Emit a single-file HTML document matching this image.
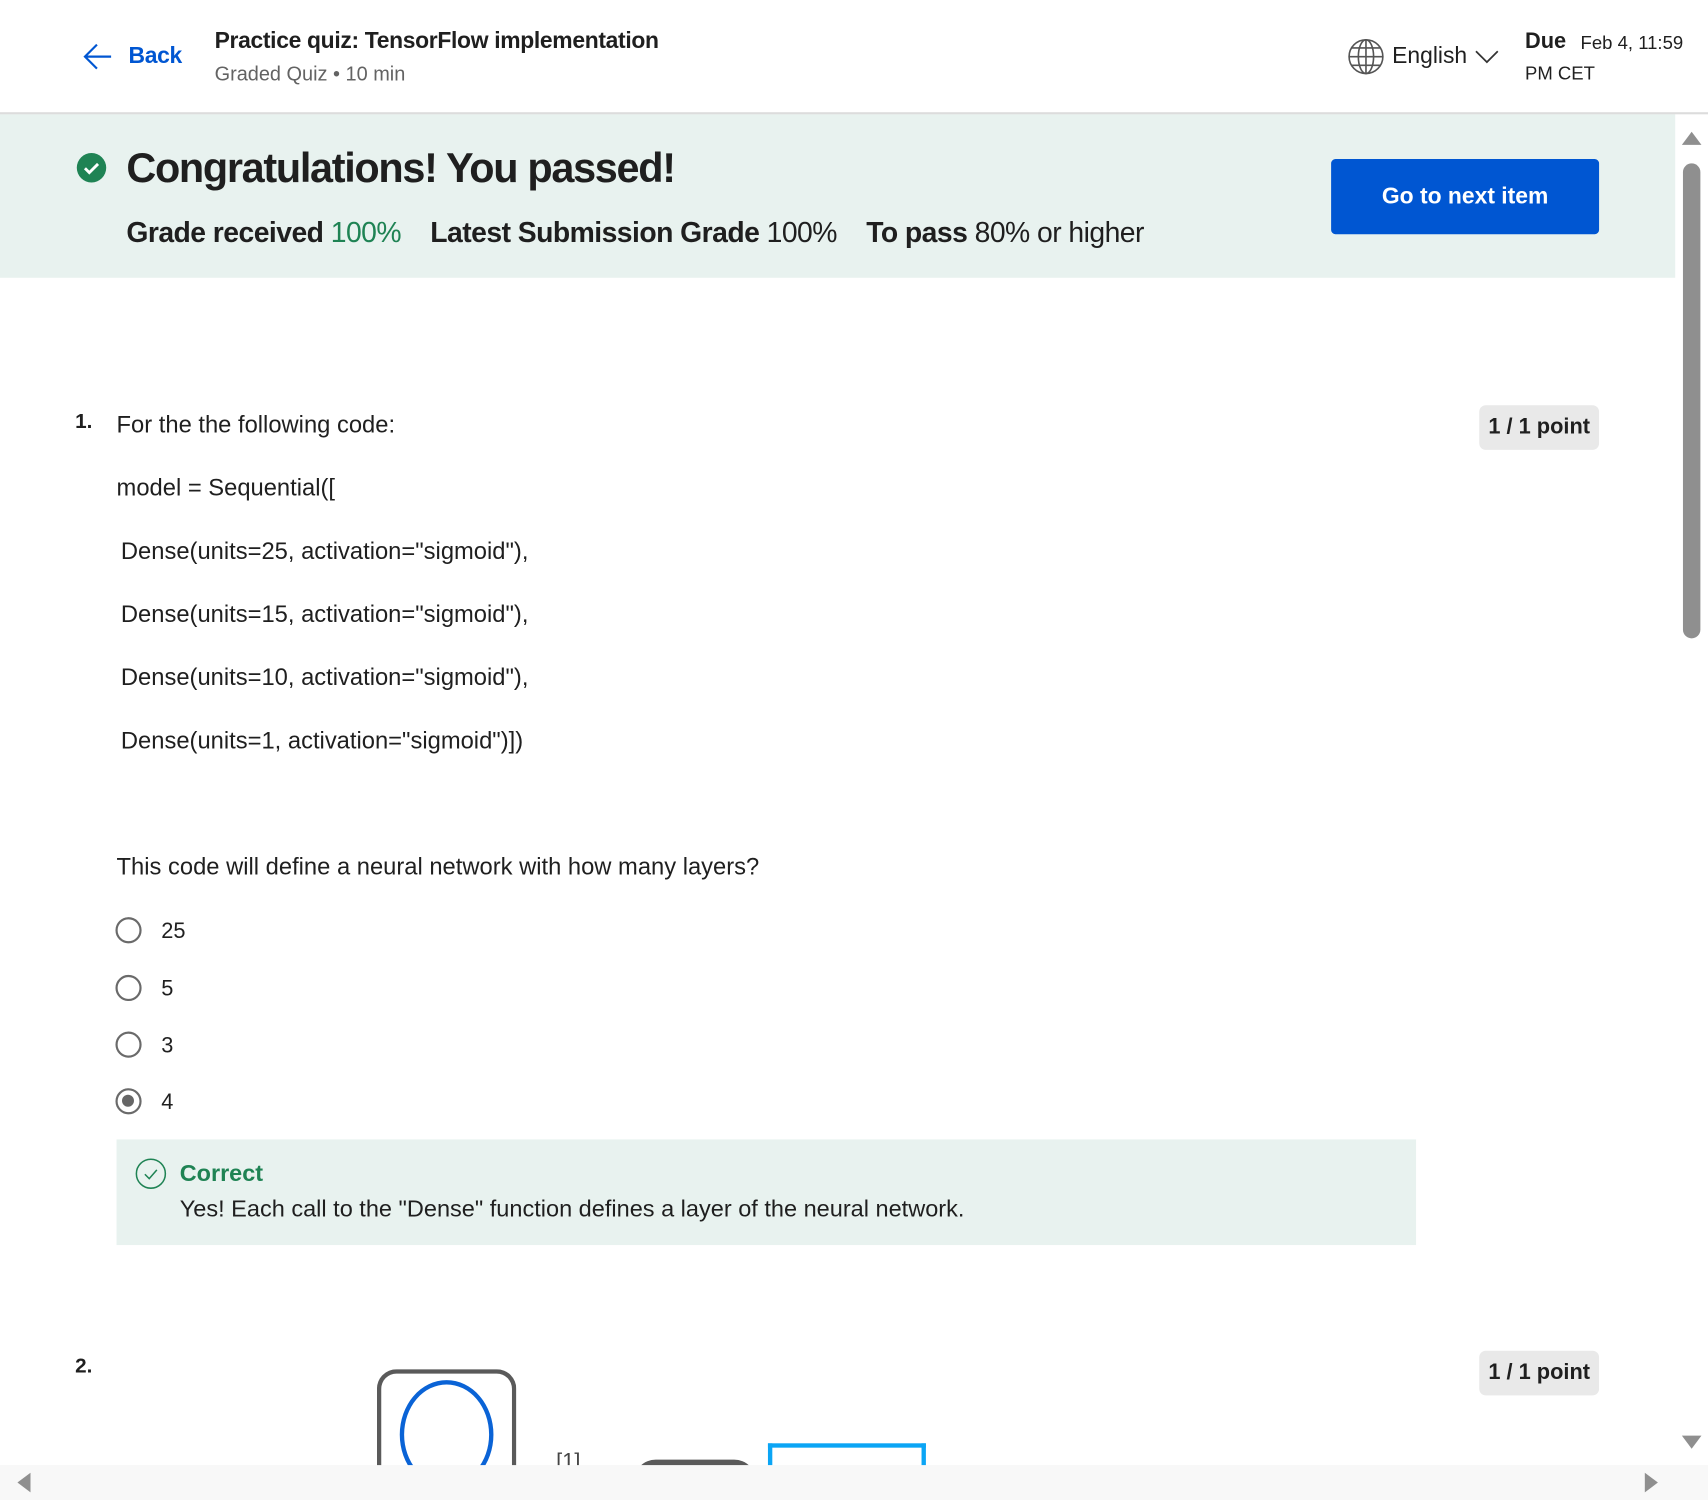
<!DOCTYPE html>
<html><head><meta charset="utf-8"><style>
html,body{margin:0;padding:0;width:1708px;height:1499px;overflow:hidden;background:#fff;}
#w{position:absolute;left:0;top:0;width:1568px;height:1377px;overflow:hidden;transform:scale(1.08929);transform-origin:0 0;font-family:"Liberation Sans",sans-serif;color:#1f1f1f;}
.a{position:absolute;white-space:nowrap;}
.code{font-size:21.8px;}
.radio{position:absolute;left:106px;width:24px;height:24px;border:2.5px solid #6a6a6a;border-radius:50%;box-sizing:border-box;}
.rl{position:absolute;left:148px;font-size:20px;}
.badge{position:absolute;left:1358px;width:110px;height:41px;background:#e9e9e9;border-radius:6px;font-weight:bold;font-size:20px;line-height:41px;text-align:center;}
</style></head><body><div id="w">
<div class="a" style="left:0;top:0;width:1568px;height:105px;border-bottom:2px solid #dcdcdc;box-sizing:border-box;background:#fff"></div>
<svg class="a" style="left:76px;top:38px" width="28" height="28" viewBox="0 0 28 28"><path d="M26 14H3M13 3L2 14l11 11" fill="none" stroke="#0056d2" stroke-width="2"/></svg>
<div class="a" style="left:118px;top:40px;font-size:21px;font-weight:bold;color:#0056d2;letter-spacing:-0.3px">Back</div>
<div class="a" style="left:197px;top:26px;font-size:21px;font-weight:bold;letter-spacing:-0.3px">Practice quiz: TensorFlow implementation</div>
<div class="a" style="left:197px;top:57px;font-size:18.3px;color:#636363">Graded Quiz • 10 min</div>
<svg class="a" style="left:1237px;top:35px" width="34" height="34" viewBox="0 0 34 34" fill="none" stroke="#555" stroke-width="1.5"><circle cx="17" cy="17" r="15.5"/><ellipse cx="17" cy="17" rx="7" ry="15.5"/><path d="M17 1.5v31M1.5 17h31M4 9h26M4 25h26"/></svg>
<div class="a" style="left:1278px;top:40px;font-size:21px;color:#1f1f1f">English</div>
<svg class="a" style="left:1354px;top:45px" width="22" height="14" viewBox="0 0 22 14"><path d="M1 2l10 10 10-10" fill="none" stroke="#333" stroke-width="1.6"/></svg>
<div class="a" style="left:1400px;top:27px;font-size:20px;font-weight:bold">Due</div>
<div class="a" style="left:1451px;top:30px;font-size:17px">Feb 4, 11:59</div>
<div class="a" style="left:1400px;top:58px;font-size:17px">PM CET</div>
<div class="a" style="left:0;top:105px;width:1538px;height:150px;background:#e8f2ef"></div>
<svg class="a" style="left:70px;top:140px" width="28" height="28" viewBox="0 0 28 28"><circle cx="14" cy="14" r="13.5" fill="#1f8354"/><path d="M8 14.5l4 4 8-8" fill="none" stroke="#fff" stroke-width="2.6"/></svg>
<div class="a" style="left:116px;top:134px;font-size:38px;font-weight:bold;letter-spacing:-1.2px;color:#1f1f1f">Congratulations! You passed!</div>
<div class="a" style="left:116px;top:198px;font-size:26px;letter-spacing:-0.5px"><b>Grade received</b> <span style="color:#1f8354">100%</span>&nbsp;&nbsp;&nbsp; <b>Latest Submission Grade</b> 100%&nbsp;&nbsp;&nbsp; <b>To pass</b> 80% or higher</div>
<div class="a" style="left:1222px;top:146px;width:246px;height:69px;background:#0056d2;border-radius:4px;color:#fff;font-weight:bold;font-size:21px;line-height:70px;text-align:center">Go to next item</div>
<div class="a" style="left:69px;top:377px;font-size:19px;font-weight:bold">1.</div>
<div class="badge" style="top:372px">1 / 1 point</div>
<div class="a code" style="left:107px;top:377px">For the the following code:</div>
<div class="a code" style="left:107px;top:435px">model = Sequential([</div>
<div class="a code" style="left:111px;top:493px">Dense(units=25, activation="sigmoid"),</div>
<div class="a code" style="left:111px;top:551px">Dense(units=15, activation="sigmoid"),</div>
<div class="a code" style="left:111px;top:609px">Dense(units=10, activation="sigmoid"),</div>
<div class="a code" style="left:111px;top:667px">Dense(units=1, activation="sigmoid")])</div>
<div class="a code" style="left:107px;top:783px">This code will define a neural network with how many layers?</div>
<div class="radio" style="top:842px"></div><div class="rl" style="top:844px">25</div>
<div class="radio" style="top:895px"></div><div class="rl" style="top:897px">5</div>
<div class="radio" style="top:947px"></div><div class="rl" style="top:949px">3</div>
<div class="radio" style="top:999px"><div style="position:absolute;left:4px;top:4px;width:11px;height:11px;border-radius:50%;background:#666"></div></div><div class="rl" style="top:1001px">4</div>
<div class="a" style="left:107px;top:1046px;width:1193px;height:97px;background:#e8f2ef"></div>
<svg class="a" style="left:124px;top:1063px" width="29" height="29" viewBox="0 0 29 29"><circle cx="14.5" cy="14.5" r="13.3" fill="none" stroke="#1f8354" stroke-width="1.4"/><path d="M9 15l4 4 7-8" fill="none" stroke="#1f8354" stroke-width="1.4"/></svg>
<div class="a" style="left:165px;top:1065px;font-size:21.5px;font-weight:bold;color:#1f8354">Correct</div>
<div class="a" style="left:165px;top:1097px;font-size:21.6px">Yes! Each call to the "Dense" function defines a layer of the neural network.</div>
<div class="a" style="left:69px;top:1244px;font-size:19px;font-weight:bold">2.</div>
<div class="badge" style="top:1240px">1 / 1 point</div>
<div class="a" style="left:346px;top:1257px;width:128px;height:110px;border:4px solid #5a5a5a;border-bottom:none;border-radius:18px 18px 0 0;box-sizing:border-box"></div>
<div class="a" style="left:367px;top:1267px;width:86px;height:100px;border:4px solid #0a63d6;border-radius:50%;box-sizing:border-box"></div>
<div class="a" style="left:705px;top:1325px;width:145px;height:40px;border:4px solid #0ba5f5;border-bottom:none;box-sizing:border-box"></div>
<div class="a" style="left:582px;top:1340px;width:112px;height:20px;background:#5a5a5a;border-radius:20px 20px 0 0"></div>
<div class="a" style="left:505px;top:1331px;font-size:20px;color:#444">,[1]</div>
<div class="a" style="left:1538px;top:105px;width:30px;height:1240px;background:#fff"></div>
<div class="a" style="left:1545px;top:150px;width:16px;height:436px;background:#8f8f8f;border-radius:8px"></div>
<svg class="a" style="left:1543px;top:120px" width="20" height="14"><path d="M10 1L19 13H1z" fill="#8f8f8f"/></svg>
<svg class="a" style="left:1543px;top:1317px" width="20" height="14"><path d="M10 13L19 1H1z" fill="#8f8f8f"/></svg>
<div class="a" style="left:0;top:1345px;width:1568px;height:32px;background:#f8f8f8"></div>
<svg class="a" style="left:14px;top:1351px" width="16" height="20"><path d="M2 10L14 1v18z" fill="#8f8f8f"/></svg>
<svg class="a" style="left:1508px;top:1351px" width="16" height="20"><path d="M14 10L2 1v18z" fill="#8f8f8f"/></svg>
</div></body></html>
